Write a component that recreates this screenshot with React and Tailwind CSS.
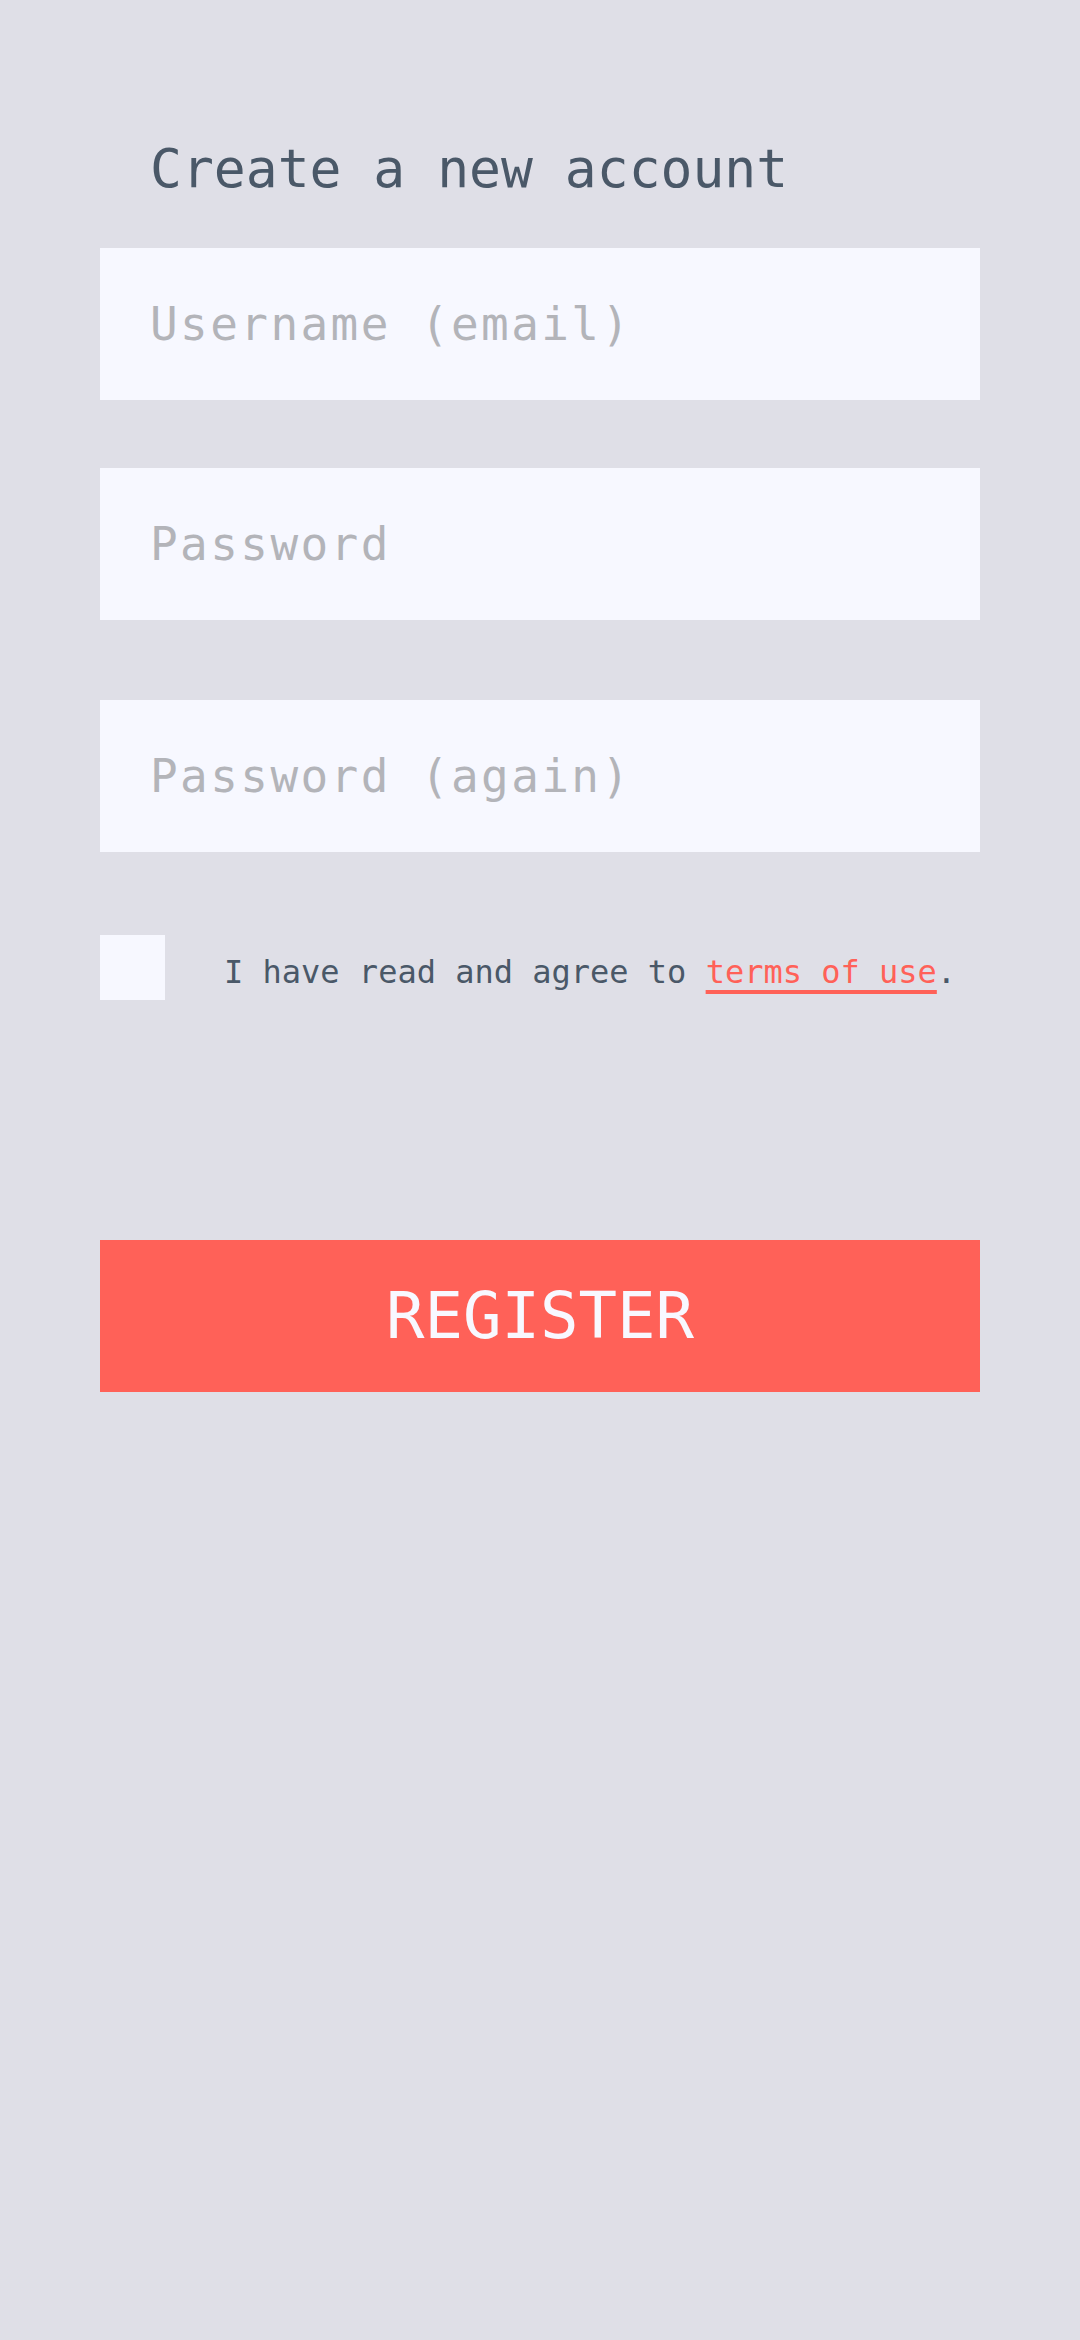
import React, { useState } from "react";

const fieldClass =
  "w-full h-[152px] bg-[#f7f8ff] px-[50px] text-[46px] tracking-[2.4px] text-[#4a5868] placeholder:text-[#b3b4b9] font-['DejaVu_Sans_Mono',monospace] outline-none";

export default function App() {
  const [form, setForm] = useState({ email: "", password: "", again: "" });
  const [agreed, setAgreed] = useState(false);

  return (
    <div className="min-h-screen bg-[#dfdfe7] font-['DejaVu_Sans_Mono',monospace]">
      <div className="px-[100px] pt-[142px]">
        <h1 className="pl-[50px] text-[53px] leading-[53px] text-[#4a5868]">
          Create a new account
        </h1>

        <input
          type="email"
          value={form.email}
          onChange={(e) => setForm({ ...form, email: e.target.value })}
          placeholder="Username (email)"
          className={`mt-[53px] block ${fieldClass}`}
        />
        <input
          type="password"
          value={form.password}
          onChange={(e) => setForm({ ...form, password: e.target.value })}
          placeholder="Password"
          className={`mt-[68px] block ${fieldClass}`}
        />
        <input
          type="password"
          value={form.again}
          onChange={(e) => setForm({ ...form, again: e.target.value })}
          placeholder="Password (again)"
          className={`mt-[80px] block ${fieldClass}`}
        />

        <div className="mt-[83px] flex items-start">
          <button
            type="button"
            onClick={() => setAgreed(!agreed)}
            className="w-[65px] h-[65px] shrink-0 bg-[#f7f8ff]"
          >
            {agreed && <span className="text-[40px] text-[#ff6158]">✓</span>}
          </button>
          <p className="ml-[59px] mt-[21px] text-[32px] leading-[32px] text-[#4a5868]">
            I have read and agree to{" "}
            <a
              href="#"
              className="text-[#ff6158] underline decoration-[4px] underline-offset-[7px]"
            >
              terms of use
            </a>
            .
          </p>
        </div>

        <button
          type="button"
          className="mt-[240px] w-full h-[152px] bg-[#ff6158] text-[64px] text-[#f8f8ff] flex items-center justify-center"
        >
          REGISTER
        </button>
      </div>
    </div>
  );
}
